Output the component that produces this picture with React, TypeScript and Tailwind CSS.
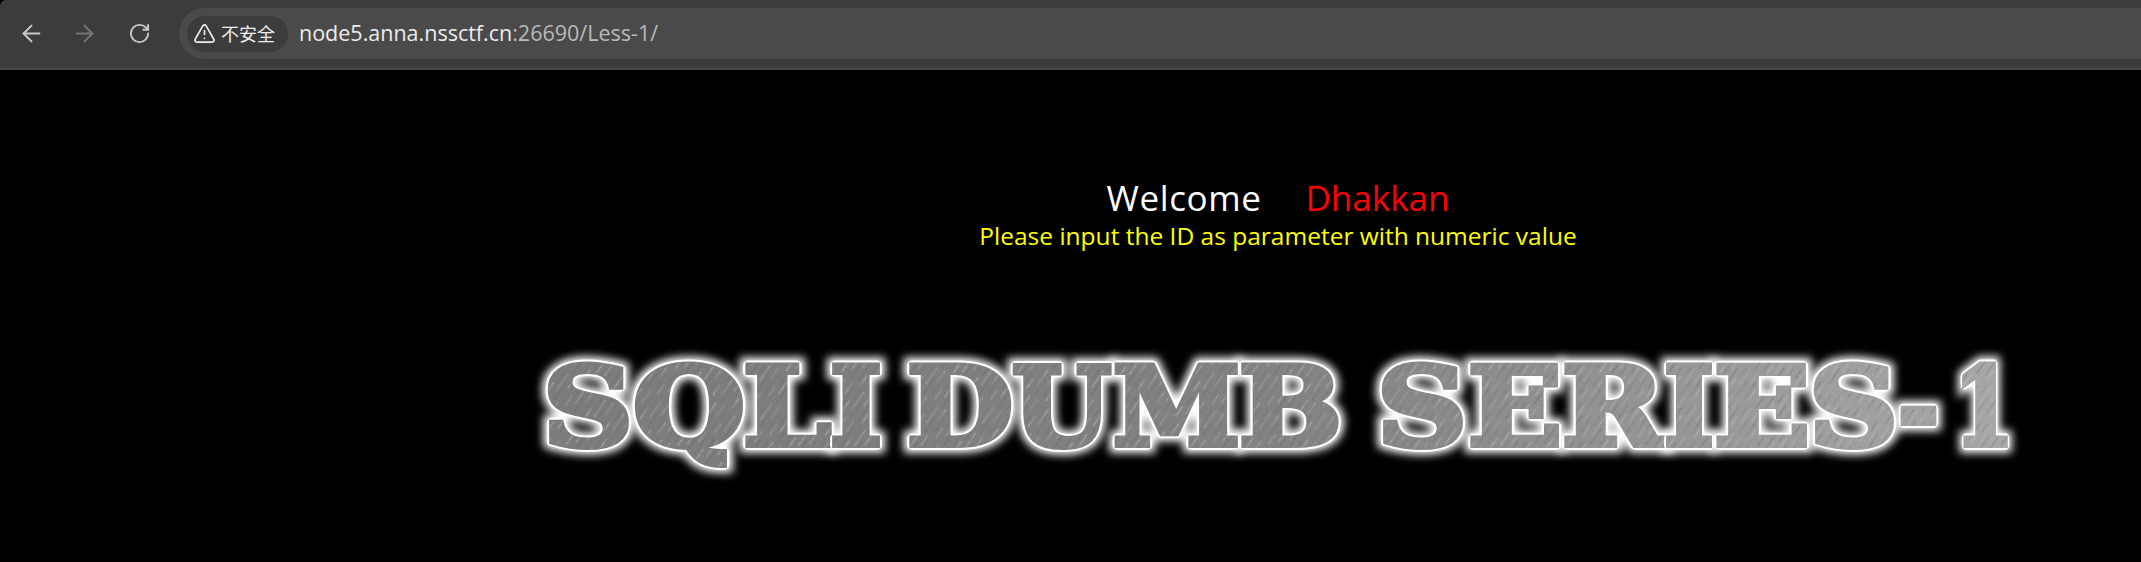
import { ArrowLeft, ArrowRight, RotateCw, TriangleAlert } from 'lucide-react'

// banner letters: x and width in svg units (the svg starts at page x 530)
const letters = [
  { c: 'S', x: 13, w: 90 },
  { c: 'Q', x: 103, w: 112 },
  { c: 'L', x: 213, w: 88 },
  { c: 'I', x: 300, w: 52 },
  { c: 'D', x: 377, w: 106 },
  { c: 'U', x: 482, w: 99 },
  { c: 'M', x: 583, w: 127 },
  { c: 'B', x: 709, w: 103 },
  { c: 'S', x: 847, w: 90 },
  { c: 'E', x: 938, w: 94 },
  { c: 'R', x: 1032, w: 102 },
  { c: 'I', x: 1134, w: 50 },
  { c: 'E', x: 1184, w: 96 },
  { c: 'S', x: 1279, w: 89 },
  { c: '-', x: 1368, w: 41 },
  { c: '1', x: 1424, w: 60 },
]

function Banner() {
  const font = { fontFamily: "'DejaVu Serif', serif", fontWeight: 900, fontSize: 109 }
  return (
    <svg width="1500" height="135" viewBox="0 0 1500 135" className="block overflow-visible">
      <defs>
        <linearGradient id="metal" gradientUnits="userSpaceOnUse" x1="0" y1="0" x2="1500" y2="0">
          <stop offset="0" stopColor="#7c7c7c" />
          <stop offset="0.5" stopColor="#828282" />
          <stop offset="1" stopColor="#a8a8a8" />
        </linearGradient>
        <pattern id="hatch" width="23" height="31" patternUnits="userSpaceOnUse" patternTransform="rotate(35)">
          <rect x="1" y="2" width="1.2" height="20" fill="#c4c4c4" opacity="0.3" />
          <rect x="5" y="12" width="1" height="26" fill="#5a5a5a" opacity="0.25" />
          <rect x="9" y="0" width="1.4" height="14" fill="#bdbdbd" opacity="0.25" />
          <rect x="13" y="8" width="1" height="19" fill="#626262" opacity="0.25" />
          <rect x="17" y="17" width="1.3" height="12" fill="#c9c9c9" opacity="0.3" />
          <rect x="20" y="3" width="1" height="11" fill="#5f5f5f" opacity="0.25" />
        </pattern>
        <filter id="glow" x="-30%" y="-30%" width="160%" height="160%">
          <feGaussianBlur stdDeviation="4.5" />
        </filter>
      </defs>
      <g {...font}>
        {letters.map((l) => (
          <text key={l.x} x={l.x} y="100" textLength={l.w} lengthAdjust="spacingAndGlyphs" fill="#fff" stroke="#fff" strokeWidth="16" filter="url(#glow)">
            {l.c}
          </text>
        ))}
        {letters.map((l) => (
          <g key={l.x}>
            <text x={l.x} y="100" textLength={l.w} lengthAdjust="spacingAndGlyphs" fill="#fff" stroke="#fff" strokeWidth="10" strokeLinejoin="round">
              {l.c}
            </text>
            <text x={l.x} y="100" textLength={l.w} lengthAdjust="spacingAndGlyphs" fill="url(#metal)" stroke="url(#metal)" strokeWidth="6">
              {l.c}
            </text>
            <text x={l.x} y="100" textLength={l.w} lengthAdjust="spacingAndGlyphs" fill="url(#hatch)" stroke="url(#hatch)" strokeWidth="6">
              {l.c}
            </text>
          </g>
        ))}
      </g>
    </svg>
  )
}

export default function App() {
  return (
    <div className="w-[2141px] h-[562px] overflow-hidden bg-black font-['Open_Sans',sans-serif]">
      <div className="h-[70px] pt-[8px] bg-[#3c3c3c] border-b-2 border-[#474747] rounded-tl-[6px]">
        <div className="h-[51px] flex items-center pl-[18px]">
          <ArrowLeft size={27} className="text-[#c8c8c8]" strokeWidth={1.8} />
          <ArrowRight size={27} className="ml-[26px] text-[#757575]" strokeWidth={1.8} />
          <RotateCw size={23} className="ml-[30px] text-[#c8c8c8]" strokeWidth={2} />
          <div className="ml-[28px] flex-1 h-[51px] rounded-l-[26px] bg-[#4a4a4a] flex items-center pl-[8px]">
            <div className="h-[36px] w-[101px] rounded-full bg-[#3c3c3c] flex items-center pl-[6px] gap-[5px]">
              <TriangleAlert size={23} className="text-[#ececec]" strokeWidth={1.75} />
              <span className="text-[18px] text-[#eee] font-['Noto_Sans_CJK_SC',sans-serif]">不安全</span>
            </div>
            <div className="ml-[11px] text-[21.5px] text-[#ececec]">
              node5.anna.nssctf.cn<span className="text-[#b9b9b9]">:26690/Less-1/</span>
            </div>
          </div>
        </div>
      </div>
      <div className="flex flex-col items-center pl-[415px] pt-[105px]">
        <div className="flex items-center gap-[44px] text-[35px] leading-[46px]">
          <span className="text-white tracking-[0.6px]">Welcome</span>
          <span className="text-[#ff0000]">Dhakkan</span>
        </div>
        <div className="text-[24.5px] leading-[30px] text-[#ffff00]">Please input the ID as parameter with numeric value</div>
        <div className="mt-[94px] ml-[4px]">
          <Banner />
        </div>
      </div>
    </div>
  )
}
